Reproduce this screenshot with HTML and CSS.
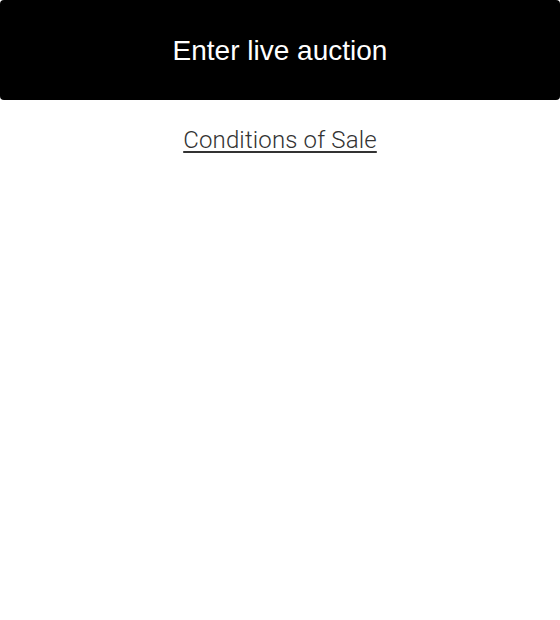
FILE: index.html
```html
<!DOCTYPE html>
<html>
<head>
<meta charset="utf-8">
<link rel="stylesheet" href="styles.css">
</head>
<body>
<div class="page">
  <button class="enter-btn">Enter live auction</button>
  <a class="conditions" href="#">Conditions of Sale</a>
</div>
</body>
</html>
```
FILE: styles.css
```css
html, body {
  margin: 0;
  padding: 0;
  background: #fff;
}
.page {
  display: flex;
  flex-direction: column;
  align-items: center;
}
.enter-btn {
  width: 560px;
  height: 100px;
  background: #000;
  color: #fff;
  border: none;
  border-radius: 4px;
  font-family: "Liberation Sans", Arial, sans-serif;
  font-size: 28px;
  padding: 2px 0 0 0;
  margin: 0;
}
.conditions {
  margin-top: 26px;
  font-family: Roboto, "Liberation Sans", sans-serif;
  font-weight: 300;
  font-size: 24px;
  letter-spacing: 0.15px;
  color: #333;
  text-decoration: underline;
  text-underline-offset: 3px;
}
```
